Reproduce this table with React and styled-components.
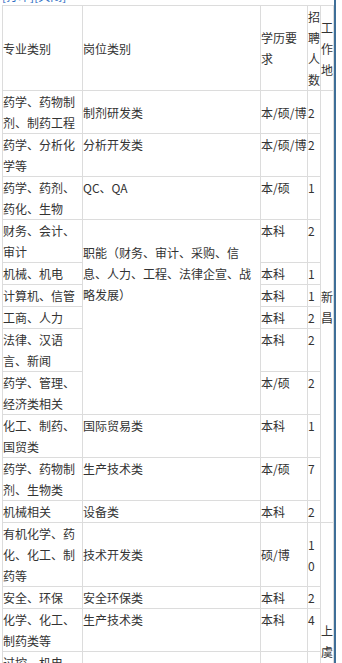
import React from 'react'
import styled, { createGlobalStyle } from 'styled-components'

const GlobalStyle = createGlobalStyle`
  html, body {
    margin: 0;
    padding: 0;
    background: #fff;
  }
  body {
    font-family: "Noto Sans CJK SC", "Microsoft YaHei", sans-serif;
    font-size: 12px;
    color: #333;
  }
`

const Wrapper = styled.div`
  width: 336px;
  min-height: 100vh;
  box-sizing: border-box;
  padding-left: 2px;
  border-right: 2px solid #3f6f98;
  overflow: hidden;
`

const LinkBar = styled.div`
  height: 19px;
  margin-top: -14px;
  line-height: 20px;
  font-size: 12px;
  color: #2b6cc4;
  white-space: nowrap;
`

const Link = styled.a`
  color: inherit;
  text-decoration: none;
`

const Table = styled.table`
  width: 331px;
  table-layout: fixed;
  border-collapse: collapse;
  word-break: break-all;
`

const Col = styled.col`
  width: ${({ $w }) => $w}px;
`

const Cell = styled.td`
  border: 1px solid #dcdcdc;
  padding: 0;
  padding-top: ${({ $padTop }) => $padTop || 0}px;
  line-height: 21px;
  text-align: left;
  vertical-align: ${({ $align }) => $align || 'top'};
  font-weight: normal;
`

const HeadCell = styled(Cell).attrs({ as: 'th' })`
  vertical-align: middle;
`

const columns = [80, 178, 47, 13, 13]

const headers = ['专业类别', '岗位类别', '学历要求', '招聘人数', '工作地']

const rows = [
  { major: '药学、药物制剂、制药工程', post: '制剂研发类', edu: '本/硕/博', num: '2', align: 'middle', place: { name: '新昌', span: 12 } },
  { major: '药学、分析化学等', post: '分析开发类', edu: '本/硕/博', num: '2' },
  { major: '药学、药剂、药化、生物', post: 'QC、QA', edu: '本/硕', num: '1' },
  {
    major: '财务、会计、审计',
    post: ['职能（财务、审计、采购、信', '息、人力、工程、法律企宣、战', '略发展）'],
    postSpan: 6,
    postPad: 22,
    edu: '本科',
    num: '2'
  },
  { major: '机械、机电', post: null, edu: '本科', num: '1' },
  { major: '计算机、信管', post: null, edu: '本科', num: '1' },
  { major: '工商、人力', post: null, edu: '本科', num: '2' },
  { major: '法律、汉语言、新闻', post: null, edu: '本科', num: '2' },
  { major: '药学、管理、经济类相关', post: null, edu: '本/硕', num: '2' },
  { major: '化工、制药、国贸类', post: '国际贸易类', edu: '本科', num: '1' },
  { major: '药学、药物制剂、生物类', post: '生产技术类', edu: '本/硕', num: '7' },
  { major: '机械相关', post: '设备类', edu: '本科', num: '2' },
  { major: '有机化学、药化、化工、制药等', post: '技术开发类', edu: '硕/博', num: '10', align: 'middle', place: { name: '上虞', span: 6 } },
  { major: '安全、环保', post: '安全环保类', edu: '本科', num: '2' },
  { major: '化学、化工、制药类等', post: '生产技术类', edu: '本科', num: '4' },
  { major: '过控、机电、仪表、自动化等', post: '设备类', edu: '本科', num: '3', align: 'middle' },
  { major: '化学、分析', post: '质检类', edu: '本科', num: '2' },
  { major: '财务、人力', post: '职能类', edu: '本科', num: '1' }
]

const renderLines = text =>
  Array.isArray(text)
    ? text.map((line, i) => (
        <React.Fragment key={i}>
          {i > 0 && <br />}
          {line}
        </React.Fragment>
      ))
    : text

const App = () => (
  <>
    <GlobalStyle />
    <Wrapper>
      <LinkBar>
        <Link href="#">[打印]</Link>
        <Link href="#">[关闭]</Link>
      </LinkBar>
      <Table>
        <colgroup>
          {columns.map((w, i) => <Col key={i} $w={w} />)}
        </colgroup>
        <tbody>
          <tr>
            {headers.map(h => <HeadCell key={h}>{h}</HeadCell>)}
          </tr>
          {rows.map((row, i) => (
            <tr key={i}>
              <Cell $align={row.align}>{row.major}</Cell>
              {row.post !== null && (
                <Cell $align={row.align} rowSpan={row.postSpan} $padTop={row.postPad}>
                  {renderLines(row.post)}
                </Cell>
              )}
              <Cell $align={row.align}>{row.edu}</Cell>
              <Cell $align={row.align}>{row.num}</Cell>
              {row.place && (
                <Cell $align="middle" rowSpan={row.place.span}>{row.place.name}</Cell>
              )}
            </tr>
          ))}
        </tbody>
      </Table>
    </Wrapper>
  </>
)

export default App
